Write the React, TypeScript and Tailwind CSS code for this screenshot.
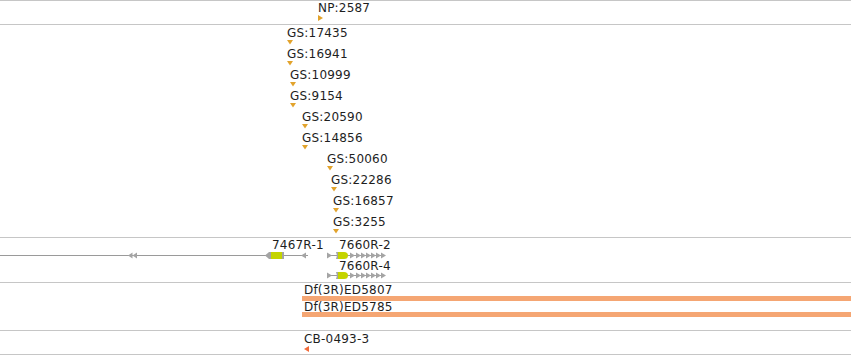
import React from 'react';

const gsRows = [
  { label: 'GS:17435', ml: 'ml-[287px]' },
  { label: 'GS:16941', ml: 'ml-[287px]' },
  { label: 'GS:10999', ml: 'ml-[290px]' },
  { label: 'GS:9154', ml: 'ml-[290px]' },
  { label: 'GS:20590', ml: 'ml-[302px]' },
  { label: 'GS:14856', ml: 'ml-[302px]' },
  { label: 'GS:50060', ml: 'ml-[327px]' },
  { label: 'GS:22286', ml: 'ml-[331px]' },
  { label: 'GS:16857', ml: 'ml-[333px]' },
  { label: 'GS:3255', ml: 'ml-[333px]' },
];

const GENE_GRAY = '#a4a4a4';
const GENE_LINE = '#9a9a9a';
const GENE_GREEN = '#c4d400';

function TriDown() {
  return (
    <svg width="6" height="5" className="block">
      <path d="M0 0H6L3 4.5Z" fill="#e2a32c" />
    </svg>
  );
}

function TriRight({ color }: { color: string }) {
  return (
    <svg width="5" height="6" className="block">
      <path d="M0 0L5 3L0 6Z" fill={color} />
    </svg>
  );
}

function TriLeft({ color }: { color: string }) {
  return (
    <svg width="5" height="6" className="block">
      <path d="M5 0L0 3L5 6Z" fill={color} />
    </svg>
  );
}

// plus strand transcript drawn from x0 on row y
function PlusGene({ x0, y }: { x0: number; y: number }) {
  const arrows = [23, 29, 34, 39, 44, 49, 54];
  return (
    <g>
      <line x1={x0 + 4} y1={y} x2={x0 + 58} y2={y} stroke={GENE_LINE} strokeWidth={1} />
      <path d={`M${x0} ${y - 3}L${x0 + 5} ${y}L${x0} ${y + 3}Z`} fill={GENE_GRAY} />
      <path d={`M${x0 + 9} ${y - 3.5}H${x0 + 11}V${y + 3.5}H${x0 + 9}L${x0 + 10} ${y}Z`} fill={GENE_GRAY} />
      <path
        d={`M${x0 + 11} ${y - 3.5}H${x0 + 17}Q${x0 + 21} ${y - 3.5} ${x0 + 21} ${y}Q${x0 + 21} ${y + 3.5} ${x0 + 17} ${y + 3.5}H${x0 + 11}Z`}
        fill={GENE_GREEN}
      />
      {arrows.map((dx) => (
        <path key={dx} d={`M${x0 + dx} ${y - 3}L${x0 + dx + 5} ${y}L${x0 + dx} ${y + 3}Z`} fill={GENE_GRAY} />
      ))}
    </g>
  );
}

export default function App() {
  return (
    <div className="flex h-[355px] w-[851px] flex-col overflow-hidden bg-white font-['DejaVu_Sans',sans-serif] text-[12px] tracking-[0.2px] text-[#1e1e1e]">
      {/* NP track */}
      <div className="flex h-[24px] shrink-0 flex-col border-t border-[#c6c6c6] pt-px">
        <span className="ml-[318px] leading-[13px]">NP:2587</span>
        <div className="ml-[318px]">
          <TriRight color="#e2a32c" />
        </div>
      </div>

      {/* GS track */}
      <div className="flex h-[213px] shrink-0 flex-col border-t border-[#c6c6c6] pt-px">
        {gsRows.map((r) => (
          <div key={r.label} className={`flex h-[21px] flex-col ${r.ml}`}>
            <span className="leading-[14px]">{r.label}</span>
            <TriDown />
          </div>
        ))}
      </div>

      {/* gene track */}
      <div className="relative h-[45px] shrink-0 border-t border-[#c6c6c6]">
        <svg width="851" height="44" className="absolute left-0 top-0">
          <line x1={0} y1={17.5} x2={308} y2={17.5} stroke={GENE_LINE} strokeWidth={1} />
          <path d="M128 17.5L132.5 14.5V20.5Z" fill={GENE_GRAY} />
          <path d="M132.5 17.5L137 14.5V20.5Z" fill={GENE_GRAY} />
          <path d="M265 17.5L269 14H271V21H269Z" fill={GENE_GRAY} />
          <rect x={271} y={14} width={11} height={7} fill={GENE_GREEN} />
          <rect x={282} y={14} width={2} height={7} fill={GENE_GRAY} />
          <path d="M301 17.5L306 14.5V20.5Z" fill={GENE_GRAY} />
          <PlusGene x0={327} y={17.5} />
          <PlusGene x0={327} y={37.5} />
        </svg>
        <span className="absolute left-[272px] top-0 leading-[14px]">7467R-1</span>
        <span className="absolute left-[339px] top-0 leading-[14px]">7660R-2</span>
        <span className="absolute left-[339px] top-[21px] leading-[14px]">7660R-4</span>
      </div>

      {/* Df track */}
      <div className="relative h-[48px] shrink-0 border-t border-[#c6c6c6]">
        <span className="absolute left-[304px] top-0 leading-[14px]">Df(3R)ED5807</span>
        <div className="absolute left-[302px] right-0 top-[13px] h-[5px] bg-[#f5a673]" />
        <span className="absolute left-[304px] top-[17px] leading-[14px]">Df(3R)ED5785</span>
        <div className="absolute left-[302px] right-0 top-[29px] h-[5px] bg-[#f5a673]" />
      </div>

      {/* CB track */}
      <div className="flex h-[25px] shrink-0 flex-col border-y border-[#c6c6c6] pt-px">
        <span className="ml-[304px] leading-[14px]">CB-0493-3</span>
        <div className="ml-[304px]">
          <TriLeft color="#f26b3a" />
        </div>
      </div>
    </div>
  );
}
